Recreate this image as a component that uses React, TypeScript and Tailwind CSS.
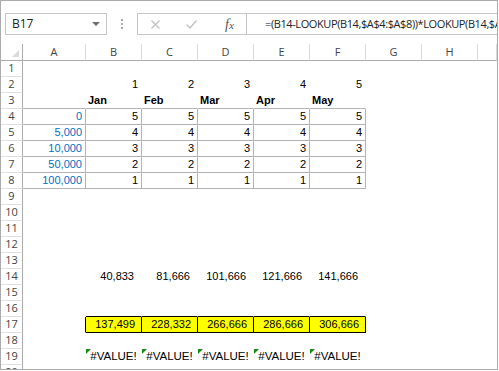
import type { ReactNode } from "react";

const colW = [
  "w-[63px]",
  "w-[56px]",
  "w-[56px]",
  "w-[56px]",
  "w-[56px]",
  "w-[56px]",
  "w-[56px]",
  "w-[56px]",
  "w-[19px]",
];
// column I is cut off at the edge, so no letter shows
const letters = ["A", "B", "C", "D", "E", "F", "G", "H", ""];

const months = ["Jan", "Feb", "Mar", "Apr", "May"];
const aVals = ["0", "5,000", "10,000", "50,000", "100,000"];
const r14 = ["40,833", "81,666", "101,666", "121,666", "141,666"];
const r17 = ["137,499", "228,332", "266,666", "286,666", "306,666"];

type Cell = { r: string; b: string; extra: string; content?: ReactNode };

function getCell(row: number, c: number): Cell {
  const cell: Cell = { r: "border-r-transparent", b: "border-b-transparent", extra: "" };
  const inB2F = c >= 1 && c <= 5;

  if (row === 2 && inB2F) {
    cell.extra = "justify-end pr-[3px]";
    cell.content = c;
  }
  if (row === 3 && c <= 5) {
    cell.b = "border-b-[#b4b4b4]";
    if (inB2F) {
      cell.extra = "justify-start pl-[2px] font-bold";
      cell.content = months[c - 1];
    }
  }
  if (row >= 4 && row <= 8 && c <= 5) {
    cell.r = "border-r-[#b4b4b4]";
    cell.b = "border-b-[#b4b4b4]";
    cell.extra = "justify-end pr-[3px]";
    if (c === 0) {
      cell.extra += " text-[#0070c0]";
      cell.content = aVals[row - 4];
    } else {
      cell.content = 9 - row;
    }
  }
  if (row === 14 && inB2F) {
    cell.extra = "justify-end pr-[7px]";
    cell.content = r14[c - 1];
  }
  if (row === 16 && inB2F) {
    cell.b = "border-b-black";
  }
  if (row === 17) {
    if (c === 0) cell.r = "border-r-black";
    if (inB2F) {
      cell.r = "border-r-black";
      cell.b = "border-b-black";
      cell.extra = "justify-end pr-[6px] bg-[#ffff00]";
      cell.content = r17[c - 1];
    }
  }
  if (row === 19 && inB2F) {
    cell.extra = "justify-center relative text-[11.5px]";
    cell.content = (
      <>
        <span className="absolute left-0 top-0 w-0 h-0 border-t-[5px] border-t-[#1a8a1a] border-r-[5px] border-r-transparent" />
        #VALUE!
      </>
    );
  }
  return cell;
}

function Row({ n }: { n: number }) {
  return (
    <div className="flex h-[16px] shrink-0">
      <div className="w-[22px] h-full shrink-0 border-r border-b border-r-[#ababab] border-b-[#e1e1e1] flex items-center justify-center text-[11px] text-[#444] font-['Open_Sans',sans-serif]">
        {n}
      </div>
      {colW.map((w, c) => {
        const cell = getCell(n, c);
        return (
          <div
            key={c}
            className={`${w} h-full shrink-0 border-r border-b ${cell.r} ${cell.b} flex items-center overflow-hidden whitespace-nowrap ${cell.extra}`}
          >
            {cell.content}
          </div>
        );
      })}
    </div>
  );
}

export default function App() {
  const rows = Array.from({ length: 20 }, (_, i) => i + 1);
  return (
    <div className="w-[499px] h-[371px] bg-white">
      <div className="w-[498px] h-[370px] border border-[#ababab] flex flex-col overflow-hidden font-['Liberation_Sans',sans-serif] text-[11px] text-black">
        {/* formula bar */}
        <div className="h-[43px] shrink-0 flex items-start pt-[12px]">
          <div className="ml-[4px] w-[102px] h-[22px] border border-[#c6c6c6] flex items-center pl-[6px] pr-[6px] font-['Open_Sans',sans-serif] text-[12px] text-[#222]">
            <span className="flex-1">B17</span>
            <span className="w-0 h-0 border-l-[4px] border-r-[4px] border-t-[4px] border-l-transparent border-r-transparent border-t-[#6f6f6f]" />
          </div>
          <div className="ml-[14px] mt-[6px] flex flex-col gap-[2px]">
            <span className="w-[2px] h-[2px] bg-[#a6a6a6]" />
            <span className="w-[2px] h-[2px] bg-[#a6a6a6]" />
            <span className="w-[2px] h-[2px] bg-[#a6a6a6]" />
          </div>
          <div className="ml-[14px] flex-1 h-[22px] border-y border-l border-[#c6c6c6] flex items-center overflow-hidden">
            <div className="w-[109px] h-full shrink-0 flex items-center border-r border-[#c6c6c6]">
              <svg className="ml-[13px]" width="9" height="9" viewBox="0 0 9 9">
                <path d="M0.5 0.5 L8.5 8.5 M8.5 0.5 L0.5 8.5" stroke="#c2c2c2" strokeWidth="1.3" />
              </svg>
              <svg className="ml-[26px]" width="11" height="9" viewBox="0 0 11 9">
                <path d="M0.5 4.5 L4 8 L10.5 0.5" stroke="#c2c2c2" strokeWidth="1.4" fill="none" />
              </svg>
              <span className="ml-[28px] font-['Liberation_Serif',serif] italic text-[14px] text-[#555]">
                f<span className="text-[11px]">x</span>
              </span>
            </div>
            <span className="pl-[18px] whitespace-nowrap font-['Open_Sans',sans-serif] text-[11px] tracking-[-0.4px] text-[#222]">
              =(B14-LOOKUP(B14,$A$4:$A$8))*LOOKUP(B14,$A$4:$B$8)
            </span>
          </div>
        </div>

        {/* column headers */}
        <div className="flex h-[17px] shrink-0">
          <div className="w-[22px] h-full shrink-0 border-r border-b border-r-[#ababab] border-b-[#ababab] relative">
            <span className="absolute right-[3px] bottom-[3px] w-0 h-0 border-l-[7px] border-b-[7px] border-l-transparent border-b-[#dadada]" />
          </div>
          {colW.map((w, c) => (
            <div
              key={c}
              className={`${w} h-full shrink-0 border-r border-b border-r-[#dadada] border-b-[#ababab] flex items-center justify-center text-[11px] text-[#444] font-['Open_Sans',sans-serif]`}
            >
              {letters[c]}
            </div>
          ))}
        </div>

        {/* grid */}
        <div className="flex-1 flex flex-col overflow-hidden">
          {rows.map((n) => (
            <Row key={n} n={n} />
          ))}
        </div>
      </div>
    </div>
  );
}
